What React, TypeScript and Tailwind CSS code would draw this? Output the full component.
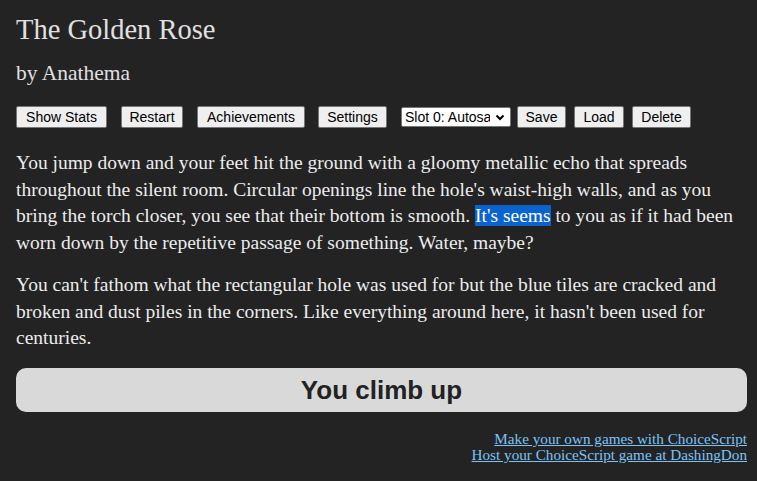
import React from "react";

const serif = { fontFamily: '"Liberation Serif", Georgia, serif' };

function Btn({ children, className = "" }: { children: React.ReactNode; className?: string }) {
  return (
    <button
      className={`h-[22px] bg-[#efefef] border border-[#767676] rounded-[2px] text-[14px] leading-none text-black text-center ${className}`}
      style={{ fontFamily: '"Liberation Sans", Arial, sans-serif' }}
    >
      {children}
    </button>
  );
}

function Line({ children }: { children: React.ReactNode }) {
  return <span className="block whitespace-nowrap">{children}</span>;
}

export default function App() {
  return (
    <div className="min-h-[481px] bg-[#232323] text-[#ececec] pl-[16px] pr-[10px] pt-[14px]" style={serif}>
      <h1 className="text-[28.5px] leading-[32px] text-[#e0e0e0]">The Golden Rose</h1>
      <h2 className="mt-[13px] text-[21.5px] leading-[28px] text-[#e0e0e0]">by Anathema</h2>
      <div className="mt-[19px] flex items-center">
        <Btn className="w-[91px]">Show Stats</Btn>
        <Btn className="w-[62px] ml-[14px]">Restart</Btn>
        <Btn className="w-[108px] ml-[14px]">Achievements</Btn>
        <Btn className="w-[69px] ml-[13px]">Settings</Btn>
        <div
          className="ml-[14px] h-[20px] w-[110px] bg-white border border-[#767676] rounded-[2px] flex items-center text-[14px] text-black overflow-hidden"
          style={{ fontFamily: '"Liberation Sans", Arial, sans-serif' }}
        >
          <span className="pl-[3px] whitespace-nowrap overflow-hidden w-[88px]">Slot 0: Autosave</span>
          <svg width="12" height="12" viewBox="0 0 12 12" className="ml-[4px]">
            <path d="M2.5 4.5 L6 8 L9.5 4.5" stroke="#000" strokeWidth="2" fill="none" />
          </svg>
        </div>
        <Btn className="w-[49px] ml-[6px]">Save</Btn>
        <Btn className="w-[50px] ml-[8px]">Load</Btn>
        <Btn className="w-[59px] ml-[8px]">Delete</Btn>
      </div>
      <p className="mt-[22px] text-[19.5px] leading-[26.7px]">
        <Line>You jump down and your feet hit the ground with a gloomy metallic echo that spreads</Line>
        <Line>throughout the silent room. Circular openings line the hole's waist-high walls, and as you</Line>
        <Line>
          bring the torch closer, you see that their bottom is smooth.{" "}
          <span className="bg-[#0b63cf] text-white">It's seems</span> to you as if it had been
        </Line>
        <Line>worn down by the repetitive passage of something. Water, maybe?</Line>
      </p>
      <p className="mt-[15px] text-[19.5px] leading-[26.7px]">
        <Line>You can't fathom what the rectangular hole was used for but the blue tiles are cracked and</Line>
        <Line>broken and dust piles in the corners. Like everything around here, it hasn't been used for</Line>
        <Line>centuries.</Line>
      </p>
      <button
        className="mt-[16px] w-full h-[44px] bg-[#d9d9d9] rounded-[10px] text-[26px] font-bold text-[#222] leading-none"
        style={{ fontFamily: '"Liberation Sans", Arial, sans-serif' }}
      >
        You climb up
      </button>
      <div className="mt-[19px] flex flex-col items-end text-[15.2px] leading-[16px]">
        <a href="#" className="underline text-[#7cc4f8]">Make your own games with ChoiceScript</a>
        <a href="#" className="underline text-[#7cc4f8]">Host your ChoiceScript game at DashingDon</a>
      </div>
    </div>
  );
}
